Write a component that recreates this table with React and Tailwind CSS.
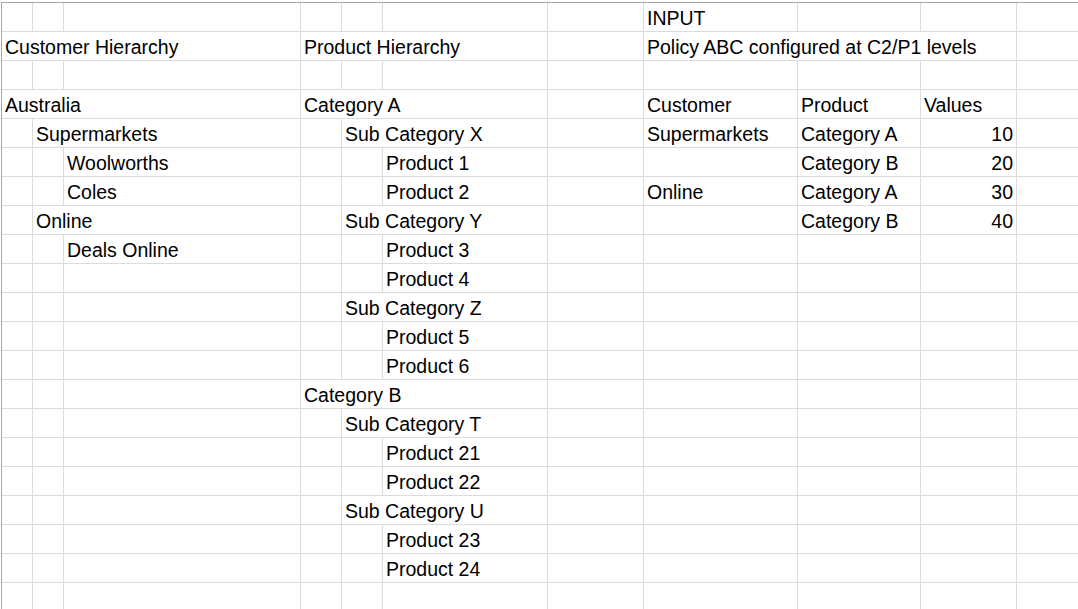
const COLUMNS = [31, 31, 237, 41, 41, 165, 96, 154, 123, 96, 100];

// each row: list of [col, text, span, align]
const ROWS = [
  [[7, 'INPUT']],
  [
    [0, 'Customer Hierarchy', 3],
    [3, 'Product Hierarchy', 3],
    [7, 'Policy ABC configured at C2/P1 levels', 3],
  ],
  [],
  [
    [0, 'Australia', 3],
    [3, 'Category A', 3],
    [7, 'Customer'],
    [8, 'Product'],
    [9, 'Values'],
  ],
  [
    [1, 'Supermarkets', 2],
    [4, 'Sub Category X', 2],
    [7, 'Supermarkets'],
    [8, 'Category A'],
    [9, '10', 1, 'right'],
  ],
  [
    [2, 'Woolworths'],
    [5, 'Product 1'],
    [8, 'Category B'],
    [9, '20', 1, 'right'],
  ],
  [
    [2, 'Coles'],
    [5, 'Product 2'],
    [7, 'Online'],
    [8, 'Category A'],
    [9, '30', 1, 'right'],
  ],
  [
    [1, 'Online', 2],
    [4, 'Sub Category Y', 2],
    [8, 'Category B'],
    [9, '40', 1, 'right'],
  ],
  [
    [2, 'Deals Online'],
    [5, 'Product 3'],
  ],
  [[5, 'Product 4']],
  [[4, 'Sub Category Z', 2]],
  [[5, 'Product 5']],
  [[5, 'Product 6']],
  [[3, 'Category B', 3]],
  [[4, 'Sub Category T', 2]],
  [[5, 'Product 21']],
  [[5, 'Product 22']],
  [[4, 'Sub Category U', 2]],
  [[5, 'Product 23']],
  [[5, 'Product 24']],
  [],
];

function buildCells(entries) {
  const cells = [];
  let col = 0;

  while (col < COLUMNS.length) {
    const entry = entries.find((item) => item[0] === col);
    const span = entry ? entry[2] || 1 : 1;
    let width = 0;

    for (let i = col; i < col + span; i += 1) {
      width += COLUMNS[i];
    }

    cells.push({
      key: col,
      width,
      text: entry ? entry[1] : '',
      align: entry ? entry[3] || 'left' : 'left',
    });
    col += span;
  }

  return cells;
}

function Row({ entries }) {
  const cells = buildCells(entries);

  return (
    <div className="flex h-[29px] shrink-0">
      {cells.map((cell) => (
        <div
          key={cell.key}
          className={`h-[29px] shrink-0 overflow-hidden whitespace-nowrap border-b border-r border-[#dcdcdc] pt-[2px] text-[19.5px] leading-[27px] text-black ${
            cell.align === 'right' ? 'pr-[3px] text-right' : 'pl-[3px] text-left'
          }`}
          style={{ width: cell.width }}
        >
          {cell.text}
        </div>
      ))}
    </div>
  );
}

export default function App() {
  return (
    <div className="h-[609px] w-[1078px] overflow-hidden bg-white pl-px pt-[2px] font-['Liberation_Sans',Arial,sans-serif]">
      <div className="flex w-[1200px] flex-col border-l border-t border-[#a6a6a6]">
        {ROWS.map((entries, index) => (
          <Row key={index} entries={entries} />
        ))}
      </div>
    </div>
  );
}
